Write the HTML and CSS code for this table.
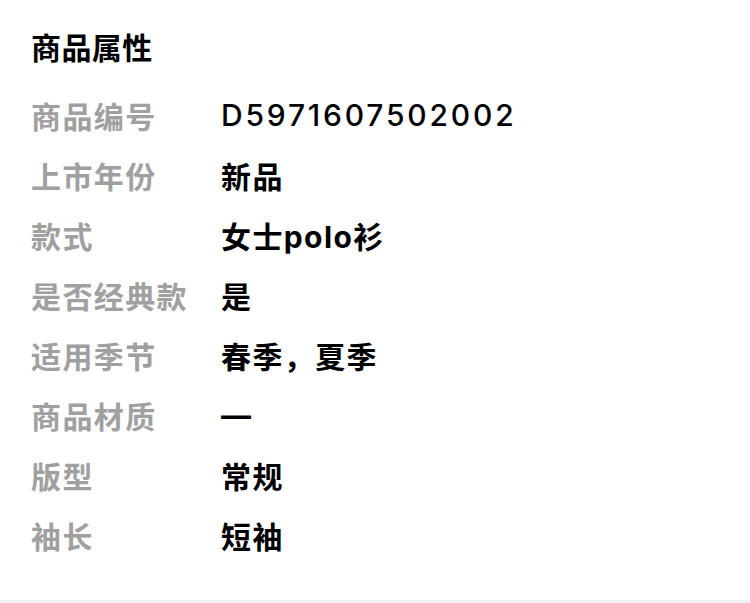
FILE: index.html
```html
<!DOCTYPE html>
<html lang="zh-CN">
<head>
    <meta charset="UTF-8">
    <meta name="viewport" content="width=device-width, initial-scale=1.0">
    <title>商品属性</title>
    <link rel="stylesheet" href="styles.css">
</head>
<body>

    <!-- 商品属性 -->
    <section class="attr-card">
        <h2 class="attr-title">商品属性</h2>

        <ul class="attr-list">
            <li class="attr-row">
                <span class="attr-label">商品编号</span>
                <span class="attr-value code">D5971607502002</span>
            </li>
            <li class="attr-row">
                <span class="attr-label">上市年份</span>
                <span class="attr-value">新品</span>
            </li>
            <li class="attr-row">
                <span class="attr-label">款式</span>
                <span class="attr-value">女士polo衫</span>
            </li>
            <li class="attr-row">
                <span class="attr-label">是否经典款</span>
                <span class="attr-value">是</span>
            </li>
            <li class="attr-row">
                <span class="attr-label">适用季节</span>
                <span class="attr-value">春季，夏季</span>
            </li>
            <li class="attr-row">
                <span class="attr-label">商品材质</span>
                <span class="attr-value">—</span>
            </li>
            <li class="attr-row">
                <span class="attr-label">版型</span>
                <span class="attr-value">常规</span>
            </li>
            <li class="attr-row">
                <span class="attr-label">袖长</span>
                <span class="attr-value">短袖</span>
            </li>
        </ul>
    </section>

</body>
</html>
```

FILE: styles.css
```css
* {
    margin: 0;
    padding: 0;
    box-sizing: border-box;
    font-family: Inter, 'Noto Sans CJK SC', sans-serif;
}
body {
    background-color: #f2f2f2;
}
.attr-card {
    background: #fff;
    height: 600px;
    padding: 28px 31px 0;
}
.attr-title {
    font-size: 30px;
    line-height: 40px;
    font-weight: 700;
    color: #000;
    letter-spacing: 0.4px;
}
.attr-list {
    list-style: none;
    margin-top: 17px;
}
.attr-row {
    display: flex;
    align-items: center;
    height: 60px;
}
.attr-label {
    width: 190px;
    flex-shrink: 0;
    font-size: 30px;
    font-weight: 700;
    color: #a0a0a0;
    letter-spacing: 1.4px;
}
.attr-value {
    font-size: 30px;
    font-weight: 700;
    color: #000;
    letter-spacing: 1.4px;
}
.attr-value.code {
    font-weight: 500;
    letter-spacing: 2.8px;
}
```
